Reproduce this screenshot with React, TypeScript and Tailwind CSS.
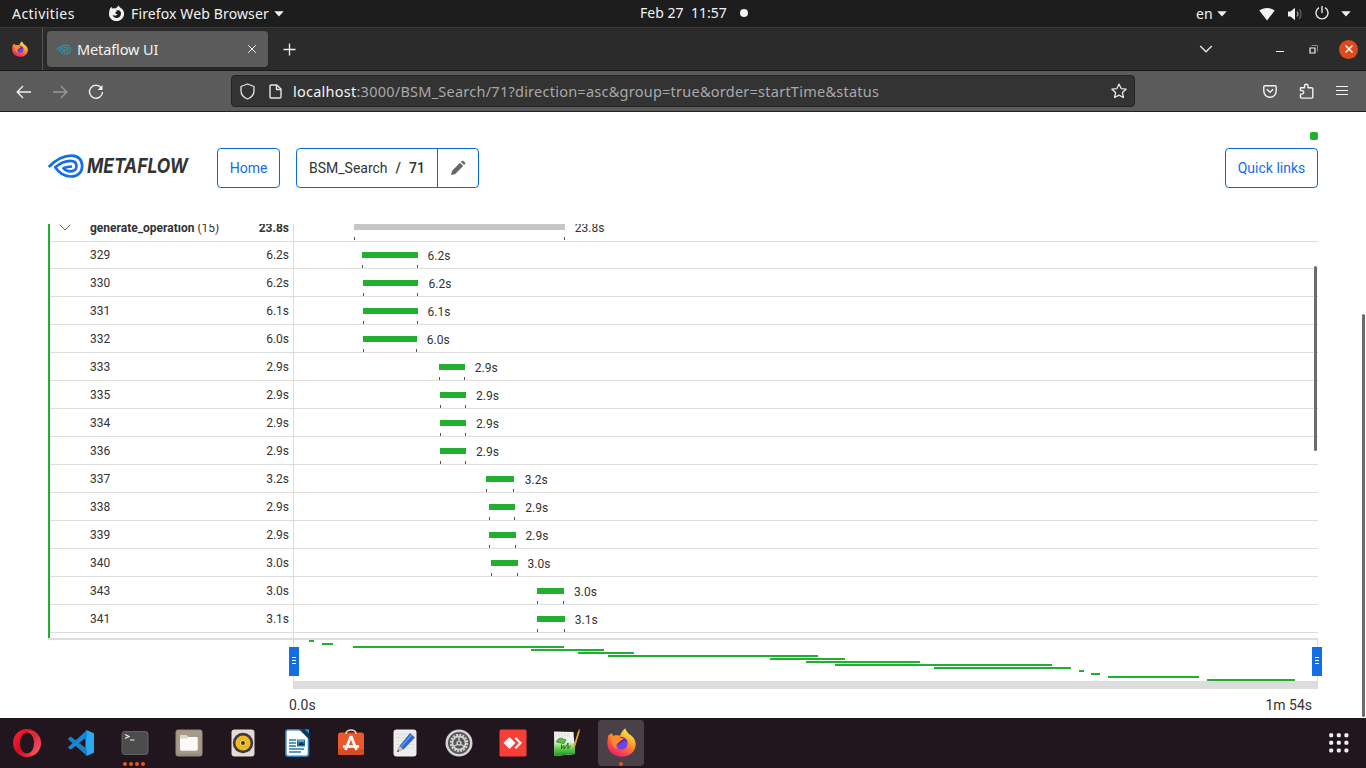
import React from "react";

type Row = { id: string; dur: string; start: number; end: number; label: number };

const rows: Row[] = [
  { id: "329", dur: "6.2s", start: 362, end: 418, label: 427.5 },
  { id: "330", dur: "6.2s", start: 363, end: 418, label: 428.5 },
  { id: "331", dur: "6.1s", start: 363, end: 418, label: 427.5 },
  { id: "332", dur: "6.0s", start: 363, end: 417, label: 426.8 },
  { id: "333", dur: "2.9s", start: 439, end: 465, label: 474.8 },
  { id: "335", dur: "2.9s", start: 440, end: 466, label: 476 },
  { id: "334", dur: "2.9s", start: 440, end: 466, label: 476 },
  { id: "336", dur: "2.9s", start: 440, end: 466, label: 476 },
  { id: "337", dur: "3.2s", start: 486, end: 514, label: 524.8 },
  { id: "338", dur: "2.9s", start: 489, end: 515, label: 525.3 },
  { id: "339", dur: "2.9s", start: 489, end: 516, label: 525.5 },
  { id: "340", dur: "3.0s", start: 491, end: 518, label: 527.5 },
  { id: "343", dur: "3.0s", start: 537, end: 564, label: 574 },
  { id: "341", dur: "3.1s", start: 537, end: 565, label: 574.8 },
];

const segments: [number, number][] = [
  [309, 314], [322, 333], [353, 564], [531, 604], [578, 634], [608, 818], [770, 845],
  [806, 920], [835, 1052], [934, 1071], [1079, 1084], [1091, 1100], [1108, 1199], [1207, 1295],
];

const ORIGIN = 294;

function Caret() {
  return (
    <svg width="10" height="6" viewBox="0 0 10 6" className="block">
      <path d="M0.300 0.300h9.400L5 5.400z" fill="#f2f2f2" />
    </svg>
  );
}

function FirefoxLogo({ size }: { size: number }) {
  const id = "fx" + size;
  return (
    <svg width={size} height={size} viewBox="0 0 28 28" className="block">
      <defs>
        <linearGradient id={id} x1="0.850" y1="0.050" x2="0.300" y2="1">
          <stop offset="0" stopColor="#fff44f" />
          <stop offset="0.300" stopColor="#ffb52e" />
          <stop offset="0.600" stopColor="#ff6a35" />
          <stop offset="1" stopColor="#ee1c6c" />
        </linearGradient>
      </defs>
      <path
        d="M1.200 7.200L4.600 5l1.600 3c2-1.200 4.400-1.400 6.400-.5C13.200 5.500 15 2.500 17.700.3c.4 2.100 1.500 3.500 3.200 5.200C25 8 27.700 11 27.700 15.600c0 7-6 12.100-13.500 12.100S.4 22.300.4 15.500c0-3 .3-5.500.8-8.300z"
        fill={`url(#${id})`}
      />
      <circle cx="14" cy="15" r="6" fill="#7542e5" />
      <path d="M9 9.500c2-1.200 5-1.500 7.500-.2 2 1 3.500 3 3.500 5.200-1-1.500-2-2-3.500-2-1 2.300-4.200 1.800-5.500 4-1.500-1-3-4-2-7z" fill="#5a33b8" />
      <path d="M4.500 7.800c3-.9 5.600-.6 7.700 1 1 1.200 3 .9 3.700 1.400-.4 1.500-2.700 1.600-3.300 2.400-.3 1.600-2.800 1.800-3.300 3.300-.6 1.500.2 3.100 1.500 4.200-3 0-6-2.500-6.500-6z" fill="#ff8a2a" />
    </svg>
  );
}

function MetaflowMark({ width, height, color }: { width: number; height: number; color: string }) {
  return (
    <svg width={width} height={height} viewBox="0 0 36 24" className="block shrink-0" fill="none" stroke={color} strokeWidth="2.700" strokeLinejoin="round">
      <path d="M0.700 13C7 6.500 15.500 1.600 23.500 1.600c6.700 0 10.700 4.300 10.700 10.400s-4.200 10.500-11.200 10.500c-6.800 0-11.800-3.300-15.800-9.200C11.500 9.600 17 6.900 22.500 6.900c3.800 0 6 2 6 5.200s-2.300 5.200-5.800 5.200c-3 0-5.300-.9-7.200-3 2-1.100 4.500-1.800 8.500-1.800" />
    </svg>
  );
}

function TopBar() {
  return (
    <div className="flex h-[27px] items-center bg-[#1d1d1d] font-['Noto_Sans',sans-serif] text-[14px] leading-[20px] text-[#f2f2f2]">
      <div className="flex w-[620px] items-center pl-3">
        <span className="w-[97px] whitespace-nowrap tracking-[0.450px]">Activities</span>
        <svg width="17" height="17" viewBox="0 0 17 17" className="-ml-px">
          <path d="M2 3.500L3.500 2l1.200 1.800c1-.5 2-.6 3-.3L10 1.200 10.300.3c.4 1 1 1.600 1.800 2.200 2.400 1.300 4 3.500 4 6.300 0 4-3.300 7.300-7.600 7.300S1 13 1 9c0-2 .3-3.700 1-5.500z" fill="#f2f2f2" />
          <path d="M7.800 4.800l3.700.8c.8.700 1.500 1.700 1.500 3A4.400 4.400 0 0 1 8.600 13c-2 0-3.500-1.300-4-3l2.600.7L9.700 9.600 7.400 8.400l.2-1.500L9.500 6z" fill="#1d1d1d" />
        </svg>
        <span className="ml-[6px] w-[143px] whitespace-nowrap tracking-[0.130px]">Firefox Web Browser</span>
        <Caret />
      </div>
      <div className="-mt-px flex flex-1 items-center pl-5">
        <span className="w-[100px] whitespace-pre tracking-[0.030px]">Feb 27  11:57</span>
        <span className="size-[8px] rounded-full bg-[#f2f2f2]" />
      </div>
      <div className="flex w-[170px] items-center">
        <span className="w-[21px]">en</span>
        <Caret />
        <svg width="16" height="14" viewBox="0 0 16 14" className="ml-8">
          <path d="M0.300 3.600C4.500 0 11.500 0 15.700 3.600L8 13.500z" fill="#f2f2f2" />
        </svg>
        <svg width="16" height="14" viewBox="0 0 16 14" className="ml-3" fill="none">
          <path d="M1 4.500h2.500L8 .8v12.400L3.500 9.500H1z" fill="#f2f2f2" />
          <path d="M10 4.500c1.200 1.500 1.200 3.500 0 5" stroke="#aaa" strokeWidth="1.200" />
          <path d="M12.300 2.500c2.300 2.500 2.300 6.500 0 9" stroke="#666" strokeWidth="1.200" />
        </svg>
        <svg width="14" height="14" viewBox="0 0 14 14" className="-mt-px ml-3" fill="none" stroke="#e8e8e8" strokeWidth="1.400">
          <path d="M7 0v7M4 1.700a6 6 0 1 0 6 0" />
        </svg>
        <span className="ml-[12px]"><Caret /></span>
      </div>
    </div>
  );
}

function TabStrip() {
  return (
    <div className="flex h-[44px] items-center border-y border-t-[#3a3a3a] border-b-[#181818] bg-[#2b2b2b] text-[#f2f2f2]">
      <div className="flex h-full w-[43px] items-center border-r border-[#555] pl-3">
        <FirefoxLogo size={16} />
      </div>
      <div className="ml-1 flex h-[36px] w-[221px] items-center rounded-[4px] bg-[#5b5b5b] pl-[9px] shadow">
        <MetaflowMark width={15} height={11} color="#1c9bb5" />
        <span className="mt-px ml-[6px] w-[170px] font-['Noto_Sans',sans-serif] text-[14.500px] tracking-[-0.120px]">Metaflow UI</span>
        <svg width="10" height="10" viewBox="0 0 10 10" stroke="#f2f2f2" strokeWidth="1"><path d="M1.200 1.200l7.600 7.600M8.800 1.200L1.200 8.800" /></svg>
      </div>
      <svg width="13" height="13" viewBox="0 0 13 13" className="ml-[15px]" stroke="#f2f2f2" strokeWidth="1.300"><path d="M6.500.5v12M.5 6.500h12" /></svg>
      <div className="ml-auto flex items-center">
        <svg width="14" height="8" viewBox="0 0 14 8" fill="none" stroke="#e5e5e5" strokeWidth="1.400"><path d="M1.200 1L7 6.800 12.800 1" /></svg>
        <span className="mt-[5px] ml-[63px] h-px w-[8px] bg-[#f2f2f2]" />
        <svg width="9" height="9" viewBox="0 0 9 9" className="ml-[25px]" fill="none"><path d="M2.500.5h6v6" stroke="#888" /><path d="M1 3h5v5H1z" stroke="#f2f2f2" strokeWidth="1.200" /></svg>
        <span className="mr-[8px] ml-[21px] flex size-[19px] items-center justify-center rounded-full bg-[#e04a1b]">
          <svg width="8" height="8" viewBox="0 0 8 8" stroke="#fff" strokeWidth="1.500"><path d="M.5.5l7 7M7.500.5l-7 7" /></svg>
        </span>
      </div>
    </div>
  );
}

function AddressBar() {
  return (
    <div className="flex h-[41px] items-center border-b border-[#202020] bg-[#5b5b5b]">
      <div className="mt-px flex w-[231px] items-center pl-[16px]">
        <svg width="16" height="14" viewBox="0 0 16 14" fill="none" stroke="#f2f2f2" strokeWidth="1.300"><path d="M15 7H1.500M7 1L1.200 7 7 13" /></svg>
        <svg width="16" height="14" viewBox="0 0 16 14" className="ml-5" fill="none" stroke="#999" strokeWidth="1.300"><path d="M1 7h13.500M9 1l5.800 6L9 13" /></svg>
        <svg width="16" height="16" viewBox="0 0 16 16" className="ml-5" fill="none" stroke="#f2f2f2" strokeWidth="1.400"><path d="M13.200 3.800A6.500 6.500 0 1 0 14.500 8" /><path d="M14.500 1v5H9.700z" fill="#f2f2f2" stroke="none" /></svg>
      </div>
      <div className="flex h-[32px] w-[904px] items-center rounded-[4px] border border-[#222] bg-[#333] pl-[8px] text-[#f2f2f2]">
        <svg width="15" height="17" viewBox="0 0 15 17" fill="none" stroke="#e5e5e5" strokeWidth="1.300" strokeLinejoin="round" className="shrink-0"><path d="M7.500 1l6.500 2.500v4c0 4-2.300 7-6.500 8.500C3.300 14.500 1 11.500 1 7.500v-4z" /></svg>
        <svg width="13" height="15" viewBox="0 0 13 15" className="ml-[14px] shrink-0" fill="none" stroke="#e5e5e5" strokeWidth="1.400" strokeLinejoin="round"><path d="M2.200 1h5.600L12 5v7.800c0 .7-.5 1.200-1.200 1.200H2.200C1.500 14 1 13.500 1 12.800V2.200C1 1.500 1.500 1 2.200 1z" /><path d="M7.500 1v4.500H12" /></svg>
        <span className="mt-[2px] ml-[11px] w-[819px] shrink-0 whitespace-nowrap font-['Noto_Sans',sans-serif] text-[14.500px] tracking-[0.245px] text-[#a9a9a9]">
          <span className="text-[#f4f4f4]">localhost</span>:3000/BSM_Search/71?direction=asc&amp;group=true&amp;order=startTime&amp;status
        </span>
        <svg width="16" height="16" viewBox="0 0 16 16" className="-ml-px shrink-0" fill="none" stroke="#e5e5e5" strokeWidth="1.300" strokeLinejoin="round"><path d="M8 1l2.100 4.600 5 .6-3.700 3.300 1 5L8 12.100 3.600 14.500l1-5L.900 6.200l5-.6z" /></svg>
      </div>
      <div className="ml-[128px] flex items-center">
        <svg width="14" height="13" viewBox="0 0 14 13" fill="none" stroke="#f2f2f2" strokeWidth="1.400" strokeLinejoin="round"><path d="M1.800.8h10.400c.6 0 1 .4 1 1V6c0 3.500-2.700 6.200-6.200 6.200S.8 9.500.8 6V1.800c0-.6.4-1 1-1z" /><path d="M3.800 4.300L7 7.300l3.200-3" /></svg>
        <svg width="15" height="16" viewBox="0 0 15 16" className="ml-[22px]" fill="none" stroke="#f2f2f2" strokeWidth="1.400" strokeLinejoin="round"><path d="M1.500 4.800h4V3a1.700 1.700 0 0 1 3.500 0v1.800h3.500c.8 0 1.300.5 1.300 1.300v8c0 .6-.3 1-1 1H2.500c-.7 0-1-.4-1-1v-3H3a1.700 1.700 0 0 0 0-3.500H1.500z" /></svg>
        <svg width="12" height="11" viewBox="0 0 12 11" className="-mt-px ml-[22px]" stroke="#f2f2f2" strokeWidth="1.200"><path d="M0 1.500h12M0 5.500h12M0 9.500h12" /></svg>
      </div>
    </div>
  );
}

function PageHeader() {
  return (
    <header className="relative flex h-[112px] shrink-0 items-start pt-9 pr-12 pl-12 text-[14px] leading-[38px] text-[#333]">
      <span className="absolute top-[20px] right-[48px] size-[8px] rounded-[2px] bg-[#20af2e]" />
      <div className="mt-[4px] flex w-[169px] items-center">
        <MetaflowMark width={36} height={24} color="#146ee6" />
        <svg width="108" height="28" viewBox="0 0 108 28" className="ml-[2px] shrink-0 overflow-visible">
          <text x="1" y="21.300" textLength="101" lengthAdjust="spacingAndGlyphs" className="fill-[#333] font-['Inter',sans-serif] text-[20px] leading-none font-bold italic">METAFLOW</text>
        </svg>
      </div>
      <button className="h-10 w-[63px] rounded-[4px] border border-[#0d66dd] text-[#146ee6]">Home</button>
      <div className="ml-4 flex h-10 w-[183px] rounded-[4px] border border-[#0d66dd]">
        <div className="w-[141px] border-r border-[#0d66dd] pl-3 whitespace-pre">
          BSM_Search<span className="ml-2 font-medium">/</span><span className="ml-2 font-medium">71</span>
        </div>
        <div className="flex flex-1 items-center justify-center">
          <svg width="16" height="16" viewBox="0 0 16 16" fill="#666"><path d="M1 15l1.100-4.200 8-8 3.100 3.100-8 8zM11 1.900l.9-.9c.5-.5 1-.5 1.500 0l1.600 1.600c.5.5.5 1 0 1.500l-.9.900z" /></svg>
        </div>
      </div>
      <button className="ml-auto h-10 w-[93px] rounded-[4px] border border-[#0d66dd] text-[#146ee6]">Quick links</button>
    </header>
  );
}

function Lane({ start, end, label, text, gray }: { start: number; end: number; label: number; text: string; gray?: boolean }) {
  return (
    <div className="relative flex-1 border-l border-[#ddd]">
      <span className={gray ? "absolute bottom-[11px] h-[6px] bg-[#c6c6c6]" : "absolute bottom-[10px] h-[6px] bg-[#20af2e]"} style={{ left: start - ORIGIN, width: end - start }} />
      <span className={gray ? "absolute bottom-px h-[3px] w-px bg-[#555]" : "absolute bottom-0 h-[3px] w-px bg-[#555]"} style={{ left: start - ORIGIN }} />
      <span className={gray ? "absolute bottom-px h-[3px] w-px bg-[#555]" : "absolute bottom-0 h-[3px] w-px bg-[#555]"} style={{ left: end - 1 - ORIGIN }} />
      <span className={gray ? "absolute bottom-[4px] leading-[18px]" : "absolute bottom-[3px] leading-[18px]"} style={{ left: label - ORIGIN }}>{text}</span>
    </div>
  );
}

function Timeline() {
  return (
    <section className="relative mx-12 h-[414px] shrink-0 overflow-hidden border-l-2 border-[#20af2e] text-[12px] text-[#333]">
      <div className="flex h-[18px] border-b border-[#ddd]">
        <div className="flex w-[243px] items-end justify-between pr-[4px] pb-[4px] leading-[18px]">
          <svg width="12" height="7" viewBox="0 0 12 7" className="mb-[6px] ml-[9px]" fill="none" stroke="#666"><path d="M.8.8L6 6l5.200-5.200" /></svg>
          <span className="mr-auto ml-[19px]"><b className="font-bold">generate_operation</b> (15)</span>
          <b className="font-bold">23.8s</b>
        </div>
        <Lane start={354} end={565} label={574.8} text="23.8s" gray />
      </div>
      {rows.map((r, i) => (
        <div key={r.id} className={i === 0 ? "flex h-[27px] border-b border-[#ddd]" : "flex h-[28px] border-b border-[#ddd]"}>
          <div className="flex w-[243px] items-end justify-between pr-[4px] pb-[4px] pl-[40px] leading-[18px]">
            <span>{r.id}</span>
            <span>{r.dur}</span>
          </div>
          <Lane start={r.start} end={r.end} label={r.label} text={r.dur} />
        </div>
      ))}
      <div className="ml-[243px] h-[5px] border-l border-[#ddd]" />
      <span className="absolute top-[42px] right-px h-[185px] w-[3px] rounded-full bg-[#6b6b6b]" />
    </section>
  );
}

function Handle() {
  return (
    <span className="flex h-[29px] w-[10px] flex-col items-center gap-[2px] bg-[#146ee6] pt-[10px]">
      <i className="h-px w-[4px] bg-white" />
      <i className="h-px w-[4px] bg-white" />
      <i className="h-px w-[4px] bg-white" />
    </span>
  );
}

function MiniMap() {
  return (
    <section className="mx-12 border-t-2 border-[#ddd] text-[14px] text-[#333]">
      <div className="relative ml-[245px] h-[49px] border-x border-b-8 border-[#ddd]">
        {segments.map(([a, b], i) => (
          <span key={i} className="absolute h-[2px] bg-[#20af2e]" style={{ left: a - ORIGIN, width: b - a, top: i * 3 }} />
        ))}
        <div className="absolute top-[7px] left-[-5px]"><Handle /></div>
        <div className="absolute top-[7px] right-[-5px]"><Handle /></div>
      </div>
      <div className="flex justify-between pt-[6px] pr-[6px] pl-[241px] leading-5">
        <span>0.0s</span>
        <span>1m 54s</span>
      </div>
    </section>
  );
}

function AppIcon({ children }: { children: React.ReactNode }) {
  return (
    <div className="flex w-[54px] items-center justify-center">
      <svg width="28" height="28" viewBox="0 0 28 28">{children}</svg>
    </div>
  );
}

function Dock() {
  return (
    <div className="relative flex h-[50px] bg-[#21151e]">
      <AppIcon>
        <defs><linearGradient id="op" x1="0" y1="0" x2="1" y2="1"><stop stopColor="#ff2534" /><stop offset=".5" stopColor="#d40c20" /><stop offset="1" stopColor="#ff5054" /></linearGradient></defs>
        <path fillRule="evenodd" fill="url(#op)" d="M14 0a14 14 0 1 0 0 28 14 14 0 0 0 0-28zm0 3.500c4 0 7 4.500 7 10.500s-3 10.500-7 10.500S7 20 7 14 10 3.500 14 3.500z" />
        <path d="M14 3.500c3-2.500 7-1.500 9.500.5A14 14 0 0 1 28 14c0 4-1.700 7.500-4.500 10-2.500 2-6.500 2.500-9.500.5 4 0 7-4.500 7-10.500s-3-10.500-7-10.500z" fill="#fff" opacity=".12" />
      </AppIcon>
      <AppIcon>
        <path d="M19.500 1L27 4.200v19.600L19.500 27l-1-6.500V7.500z" fill="#2aa8f2" />
        <path d="M.8 10l2.700-2.500L20 20v7z" fill="#1b82c9" />
        <path d="M.8 18.500l2.700 2.300L20 8V1z" fill="#1787d6" />
      </AppIcon>
      <AppIcon>
        <rect x="1" y="2.500" width="26" height="23" rx="2.500" fill="#4c4c4c" stroke="#626262" />
        <path d="M4 5.500l4 2-4 2M9 11h4.500" stroke="#eee" fill="none" strokeWidth="1.200" />
      </AppIcon>
      <AppIcon>
        <rect x=".5" y=".5" width="27" height="27" rx="3" fill="#978d7a" />
        <rect x="1.500" y="1.500" width="25" height="23" rx="2" fill="#a59b88" />
        <path d="M5 7.500c0-1 .5-1.500 1.500-1.500h5l1.500 2H21c1.200 0 1.800.7 1.800 1.700V20c0 1.200-.6 1.800-1.800 1.800H6.800C5.600 21.800 5 21.200 5 20z" fill="#fafafa" />
        <path d="M5 9V7.500C5 6.500 5.500 6 6.500 6h5L13 8l-1 1.500H5z" fill="#ddd6c8" />
      </AppIcon>
      <AppIcon>
        <rect x="2.500" y=".5" width="23" height="27" rx="3" fill="#e3dcd5" />
        <circle cx="14" cy="14" r="10.200" fill="#3b3b3b" />
        <circle cx="14" cy="14" r="5.400" fill="none" stroke="#f0b91c" strokeWidth="4.400" />
        <circle cx="14" cy="14" r="3.300" fill="#f7d455" />
        <circle cx="14" cy="14" r="1.900" fill="#333" />
      </AppIcon>
      <AppIcon>
        <path d="M5 .8h14L25.500 7v18c0 1.400-.8 2.200-2.200 2.200H5A2.200 2.200 0 0 1 2.800 25V3C2.800 1.600 3.600.8 5 .8z" fill="#fff" stroke="#2780b4" strokeWidth="1.600" />
        <path d="M16 .3h10v10z" fill="#083b59" /><path d="M21.500.3H26v4.500z" fill="#2590c7" />
        <path d="M6 11h7M6 14h7M6 17h7M6 20h15M6 23h12" stroke="#247cad" strokeWidth="1.300" />
        <path d="M14 10.500h8v7h-8z" fill="#1871a3" /><path d="M15.500 16l3-3 3 3z" fill="#102d40" /><path d="M15 12h6" stroke="#9cd7ef" />
      </AppIcon>
      <AppIcon>
        <rect x="1" y="3.500" width="26" height="22.500" rx="2.500" fill="#e9592b" />
        <path d="M1 20h26v4c0 1.400-.8 2-2 2H3c-1.200 0-2-.6-2-2z" fill="#d44e24" />
        <path d="M9 5c0-5.500 10-5.500 10 0" fill="none" stroke="#eadbb1" strokeWidth="1.500" />
        <path d="M14 7L8.500 21M14 7l5.500 14M6 17.500h16" stroke="#fff" strokeWidth="2.700" fill="none" />
      </AppIcon>
      <AppIcon>
        <rect x="2.500" y=".5" width="23" height="27" rx="3" fill="#ededed" />
        <path d="M5 5h18M5 8.500h18M5 12h18M5 15.500h18M5 19h18" stroke="#ddd" />
        <path d="M6 23l2.500-6L19 4l5 4.500L12.500 20.500z" fill="#2e66c9" />
        <path d="M6 23l2.500-6 4 3.500z" fill="#e5c38d" /><path d="M6 23l1-2.300 1.400 1.200z" fill="#333" />
        <path d="M10 18L21 5.500" stroke="#5d96ef" strokeWidth="1.500" />
      </AppIcon>
      <AppIcon>
        <circle cx="14" cy="14" r="13.500" fill="#d4d4d4" /><circle cx="14" cy="14" r="11" fill="#555" />
        <circle cx="14" cy="14" r="8.200" fill="none" stroke="#d4d4d4" strokeWidth="2" strokeDasharray="2 1.220" />
        <circle cx="14" cy="14" r="6.600" fill="none" stroke="#d4d4d4" strokeWidth="1.700" />
        <circle cx="14" cy="14" r="2.600" fill="#d4d4d4" /><circle cx="14" cy="14" r="1.200" fill="#555" />
        <path d="M14 11.500V7.500M12 15.500l-3.500 2M16 15.500l3.500 2" stroke="#d4d4d4" strokeWidth="1.400" />
      </AppIcon>
      <AppIcon>
        <rect x=".5" y=".5" width="27" height="27" rx="1.500" fill="#f93e36" />
        <path d="M10.500 8l6 6-6 6-6-6z" fill="#fff" /><path d="M15.500 9.500L17 8l6 6-6 6-1.500-1.500L20 14z" fill="#fff" />
      </AppIcon>
      <AppIcon>
        <defs><linearGradient id="np" x1="0" y1="0" x2="0" y2="1"><stop stopColor="#e6f3df" /><stop offset=".5" stopColor="#5bd044" /><stop offset="1" stopColor="#1b9420" /></linearGradient></defs>
        <path d="M1 2.500l19.500.5 1.500 22L1.500 27z" fill="#f1f1eb" />
        <path d="M1.500 13l20-.5.5 12.500-20.500 2z" fill="url(#np)" />
        <path d="M3 4.500v3M6 4.500v3M9 4.500v3M12 4.500v3M15 4.500v3" stroke="#d5d5cf" />
        <path d="M3.500 13c.5-3.500 5-5 7-2.500 3-1 3 2.200.5 2.500 1.500.8-1 2.500-2.500 1z" fill="#55c83a" stroke="#285b22" strokeWidth=".7" />
        <path d="M8.500 15.500v4l2.500-3v3.500l2.500-3 1.500-3v5.500l2.500-3" stroke="#1d4a20" strokeWidth=".8" fill="none" />
        <path d="M21 18.500L26 2" stroke="#e3a521" strokeWidth="1.800" /><path d="M26 2l.6-1.900" stroke="#d53b25" strokeWidth="1.800" />
      </AppIcon>
      <div className="flex w-[54px] items-center justify-center">
        <span className="flex h-[46px] w-[46px] items-center justify-center rounded-[4px] bg-[#4a4047]"><span className="-mt-[2px]"><FirefoxLogo size={29} /></span></span>
      </div>
      <div className="absolute top-[44px] left-[123px] flex gap-[2px]">
        {[0, 1, 2, 3].map((i) => <i key={i} className="size-[4px] rounded-full bg-[#e95420]" />)}
      </div>
      <i className="absolute top-[44px] left-[619px] size-[4px] rounded-full bg-[#e95420]" />
      <svg width="20" height="20" viewBox="0 0 20 20" className="mt-[15px] mr-[17px] ml-auto" fill="#f2f2f2">
        {[0.2, 7.8, 15.4].map((y) => [0.2, 7.8, 15.4].map((x) => <rect key={`${x}-${y}`} x={x} y={y} width="4" height="4" rx="1.300" />))}
      </svg>
    </div>
  );
}

export default function App() {
  return (
    <div className="flex h-[768px] w-[1366px] flex-col overflow-hidden bg-white font-['Roboto',sans-serif]">
      <TopBar />
      <TabStrip />
      <AddressBar />
      <main className="relative flex h-[606px] flex-col overflow-hidden">
        <PageHeader />
        <Timeline />
        <MiniMap />
        <span className="absolute top-[202px] right-px h-[403px] w-[3px] rounded-full bg-[#6b6b6b]" />
      </main>
      <Dock />
    </div>
  );
}
